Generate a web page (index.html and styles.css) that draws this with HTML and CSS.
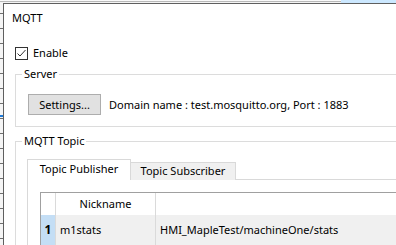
FILE: index.html
```html
<!DOCTYPE html>
<html>
<head>
<meta charset="utf-8">
<link rel="stylesheet" href="styles.css">
</head>
<body>
<div class="desk">
  <div class="topstrip"></div>
  <div class="leftstrip"></div>
  <div class="dialog">
    <div class="title">MQTT</div>
    <label class="check">
      <span class="box"><svg width="13" height="13" viewBox="0 0 13 13"><rect x="0.5" y="0.5" width="12" height="12" fill="#fff" stroke="#333"/><polyline points="2.5,6.5 5,9 10.5,3" fill="none" stroke="#333" stroke-width="1"/></svg></span>
      <span>Enable</span>
    </label>
    <fieldset class="group server">
      <legend>Server</legend>
      <div class="server-row">
        <button class="btn">Settings...</button>
        <span class="info">Domain name : test.mosquitto.org, Port : 1883</span>
      </div>
    </fieldset>
    <fieldset class="group topic">
      <legend>MQTT Topic</legend>
      <div class="tabs">
        <div class="tab active">Topic Publisher</div>
        <div class="tab">Topic Subscriber</div>
      </div>
      <div class="panel">
        <div class="grid">
          <div class="hdr corner"></div>
          <div class="hdr">Nickname</div>
          <div class="hdr last"></div>
          <div class="rowhdr">1</div>
          <div class="cell">m1stats</div>
          <div class="cell last">HMI_MapleTest/machineOne/stats</div>
        </div>
      </div>
    </fieldset>
  </div>
</div>
</body>
</html>
```

FILE: styles.css
```css
* { box-sizing: border-box; }
html, body { margin: 0; padding: 0; }
body {
  width: 396px;
  height: 245px;
  overflow: hidden;
  background: #fff;
  font-family: "Noto Sans", "Open Sans", sans-serif;
  font-size: 11px;
  line-height: 16px;
  color: #000;
}
.desk {
  display: grid;
  width: 396px;
  height: 245px;
  overflow: hidden;
  grid-template-columns: 3px 393px;
  grid-template-rows: 3px 242px;
}
.topstrip {
  grid-column: 1 / -1;
  background:
    linear-gradient(to right, transparent 341px, #cce8ff 341px),
    linear-gradient(to bottom, #fafafa 0, #fafafa 1px, #b9b9b9 1px, #b9b9b9 2px, #f4f4f4 2px);
}
.leftstrip {
  background:
    linear-gradient(to bottom, transparent 112px, #1e7ad8 112px, #1e7ad8 114px, transparent 114px),
    repeating-linear-gradient(to bottom, transparent 0, transparent 10px, #6e6e6e 10px, #6e6e6e 11px, transparent 11px, transparent 15px),
    #f5f5f5;
}
.dialog {
  overflow: hidden;
  border-top: 1px solid #5f5f5f;
  border-left: 1px solid #5f5f5f;
  background: #fff;
  padding: 6px 0 0 8px;
}
.title { height: 16px; }
.check {
  display: flex;
  align-items: center;
  gap: 5px;
  height: 16px;
  margin: 19px 0 0 3px;
}
.box { display: block; width: 13px; height: 13px; }
.box svg { display: block; }
.group {
  border: 1px solid #dcdcdc;
  margin: 0 -40px 0 3px;
  min-width: 0;
}
.group legend {
  padding: 0 2px;
  line-height: 16px;
}
.server {
  margin-top: 5px;
  padding: 12px 0 11px 6px;
}
.server-row {
  display: flex;
  align-items: center;
}
.btn {
  width: 73px;
  height: 21px;
  margin-left: 6px;
  padding: 0;
  background: #e1e1e1;
  border: 1px solid #adadad;
  border-radius: 0;
  font: inherit;
  color: #000;
}
.info { margin-left: 8px; white-space: nowrap; }
.topic {
  margin-top: 6px;
  padding: 10px 0 0 6px;
}
.tabs {
  display: flex;
  align-items: flex-end;
  height: 21px;
  margin-left: 5px;
}
.tab {
  width: 105px;
  height: 18px;
  border-top: 1px solid #d9d9d9;
  border-right: 1px solid #d9d9d9;
  background: #f0f0f0;
  text-align: center;
  white-space: nowrap;
}
.tab.active {
  position: relative;
  z-index: 1;
  width: 104px;
  height: 21px;
  padding-top: 1px;
  border-left: 1px solid #d9d9d9;
  background: #fff;
}
.panel {
  margin: -1px 0 0 5px;
  height: 70px;
  border-top: 1px solid #d9d9d9;
  border-left: 1px solid #d9d9d9;
  background: #fff;
  padding: 12px 0 0 12px;
}
.grid {
  display: grid;
  grid-template-columns: 15px 100px 1fr;
  grid-template-rows: 22px 30px;
  border-top: 1px solid #a0a0a0;
  border-left: 1px solid #a0a0a0;
}
.hdr, .rowhdr, .cell {
  display: flex;
  align-items: center;
  white-space: nowrap;
  border-right: 1px solid #dadada;
}
.hdr { background: #fff; justify-content: center; }
.rowhdr {
  background: #c4def5;
  justify-content: center;
  font-weight: bold;
  font-size: 12px;
}
.cell { background: #f0f0f0; padding-left: 4px; }
.last { border-right: none; }
```
